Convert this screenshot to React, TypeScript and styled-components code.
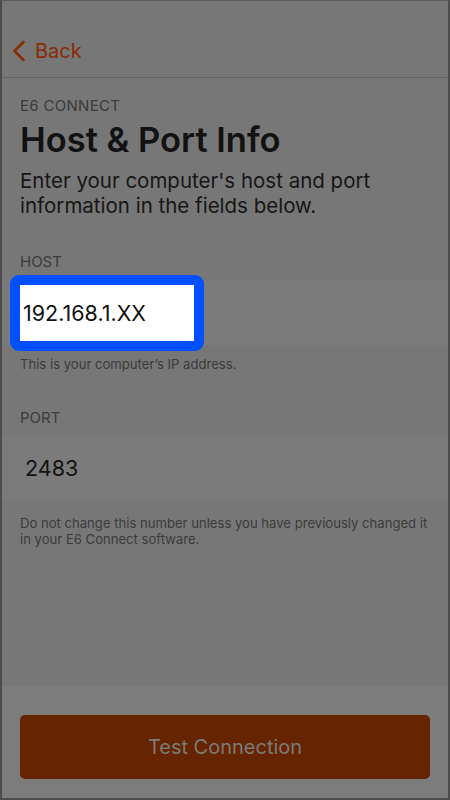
import React from "react";
import styled, { createGlobalStyle } from "styled-components";

const Global = createGlobalStyle`
  html, body { margin: 0; padding: 0; background: #777777; }
  body { font-family: Inter, "Noto Sans", "Liberation Sans", sans-serif; }
  * { box-sizing: border-box; }
`;

const Screen = styled.div`
  width: 450px;
  height: 800px;
  display: flex;
  flex-direction: column;
  background: #777777;
  border-left: 2px solid #4c4c4c;
  border-right: 2px solid #4c4c4c;
  border-top: 1px solid #5a5a5a;
  border-bottom: 2px solid #4c4c4c;
  overflow: hidden;
`;

const NavBar = styled.div`
  height: 77px;
  flex: none;
  display: flex;
  align-items: flex-end;
  padding: 0 0 14px 10px;
  border-bottom: 1px solid #636363;
`;

const BackButton = styled.div`
  display: flex;
  align-items: center;
  gap: 9px;
  color: #8a2b05;
  font-size: 20px;
  line-height: 24px;
`;

const Content = styled.div`
  flex: 1;
  display: flex;
  flex-direction: column;
  padding-top: 19px;
`;

const Eyebrow = styled.div`
  padding: 0 18px;
  font-size: 15px;
  line-height: 17px;
  color: #3b3b3b;
  letter-spacing: 0.3px;
`;

const Title = styled.h1`
  margin: 6px 0 0;
  padding: 0 18px;
  font-size: 34.5px;
  line-height: 40px;
  font-weight: 600;
  color: #121212;
`;

const Lead = styled.p`
  margin: 8px 0 0;
  padding: 0 18px;
  font-size: 20.5px;
  line-height: 25px;
  color: #161616;
`;

const Label = styled.div<{ $top: number }>`
  margin-top: ${(p) => p.$top}px;
  padding: 0 18px;
  font-size: 15px;
  line-height: 18px;
  color: #3b3b3b;
`;

const FieldRow = styled.div<{ $top: number }>`
  margin-top: ${(p) => p.$top}px;
  height: 65px;
  background: #7b7b7b;
  display: flex;
  align-items: center;
  padding-left: 8px;
`;

const Highlight = styled.div`
  border: 10px solid #0050ff;
  border-radius: 9px;
  background: #ffffff;
  width: 194px;
  height: 76px;
  flex: none;
  display: flex;
  align-items: center;
  padding-left: 3px;
  font-size: 21.5px;
  color: #111111;
`;

const FieldValue = styled.div`
  padding-left: 15px;
  font-size: 21.5px;
  color: #121212;
`;

const Help = styled.div<{ $top: number }>`
  margin-top: ${(p) => p.$top}px;
  padding: 0 4px 0 18px;
  font-size: 13.1px;
  line-height: 16px;
  color: #3b3b3b;
  white-space: nowrap;
`;

const Footer = styled.div`
  flex: none;
  height: 112px;
  background: #7c7c7c;
  display: flex;
  align-items: flex-start;
  padding: 29px 18px 0;
`;

const Button = styled.div`
  flex: 1;
  height: 64px;
  border-radius: 5px;
  background: #662400;
  display: flex;
  align-items: center;
  justify-content: center;
  font-size: 20px;
  color: #7b7b7b;
`;

export default function App() {
  return (
    <>
      <Global />
      <Screen>
        <NavBar>
          <BackButton>
            <svg width="14" height="22" viewBox="0 0 14 22">
              <path d="M11.5 2 L2.5 11 L11.5 20" fill="none" stroke="#8a2b05" strokeWidth="2.6" strokeLinecap="round" strokeLinejoin="round" />
            </svg>
            <span>Back</span>
          </BackButton>
        </NavBar>
        <Content>
          <Eyebrow>E6 CONNECT</Eyebrow>
          <Title>Host &amp; Port Info</Title>
          <Lead>
            Enter your computer's host and port
            <br />
            information in the fields below.
          </Lead>
          <Label $top={35}>HOST</Label>
          <FieldRow $top={9}>
            <Highlight>192.168.1.XX</Highlight>
          </FieldRow>
          <Help $top={11}>This is your computer’s IP address.</Help>
          <Label $top={37}>PORT</Label>
          <FieldRow $top={8}>
            <FieldValue>2483</FieldValue>
          </FieldRow>
          <Help $top={15}>
            Do not change this number unless you have previously changed it
            <br />
            in your E6 Connect software.
          </Help>
        </Content>
        <Footer>
          <Button>Test Connection</Button>
        </Footer>
      </Screen>
    </>
  );
}
